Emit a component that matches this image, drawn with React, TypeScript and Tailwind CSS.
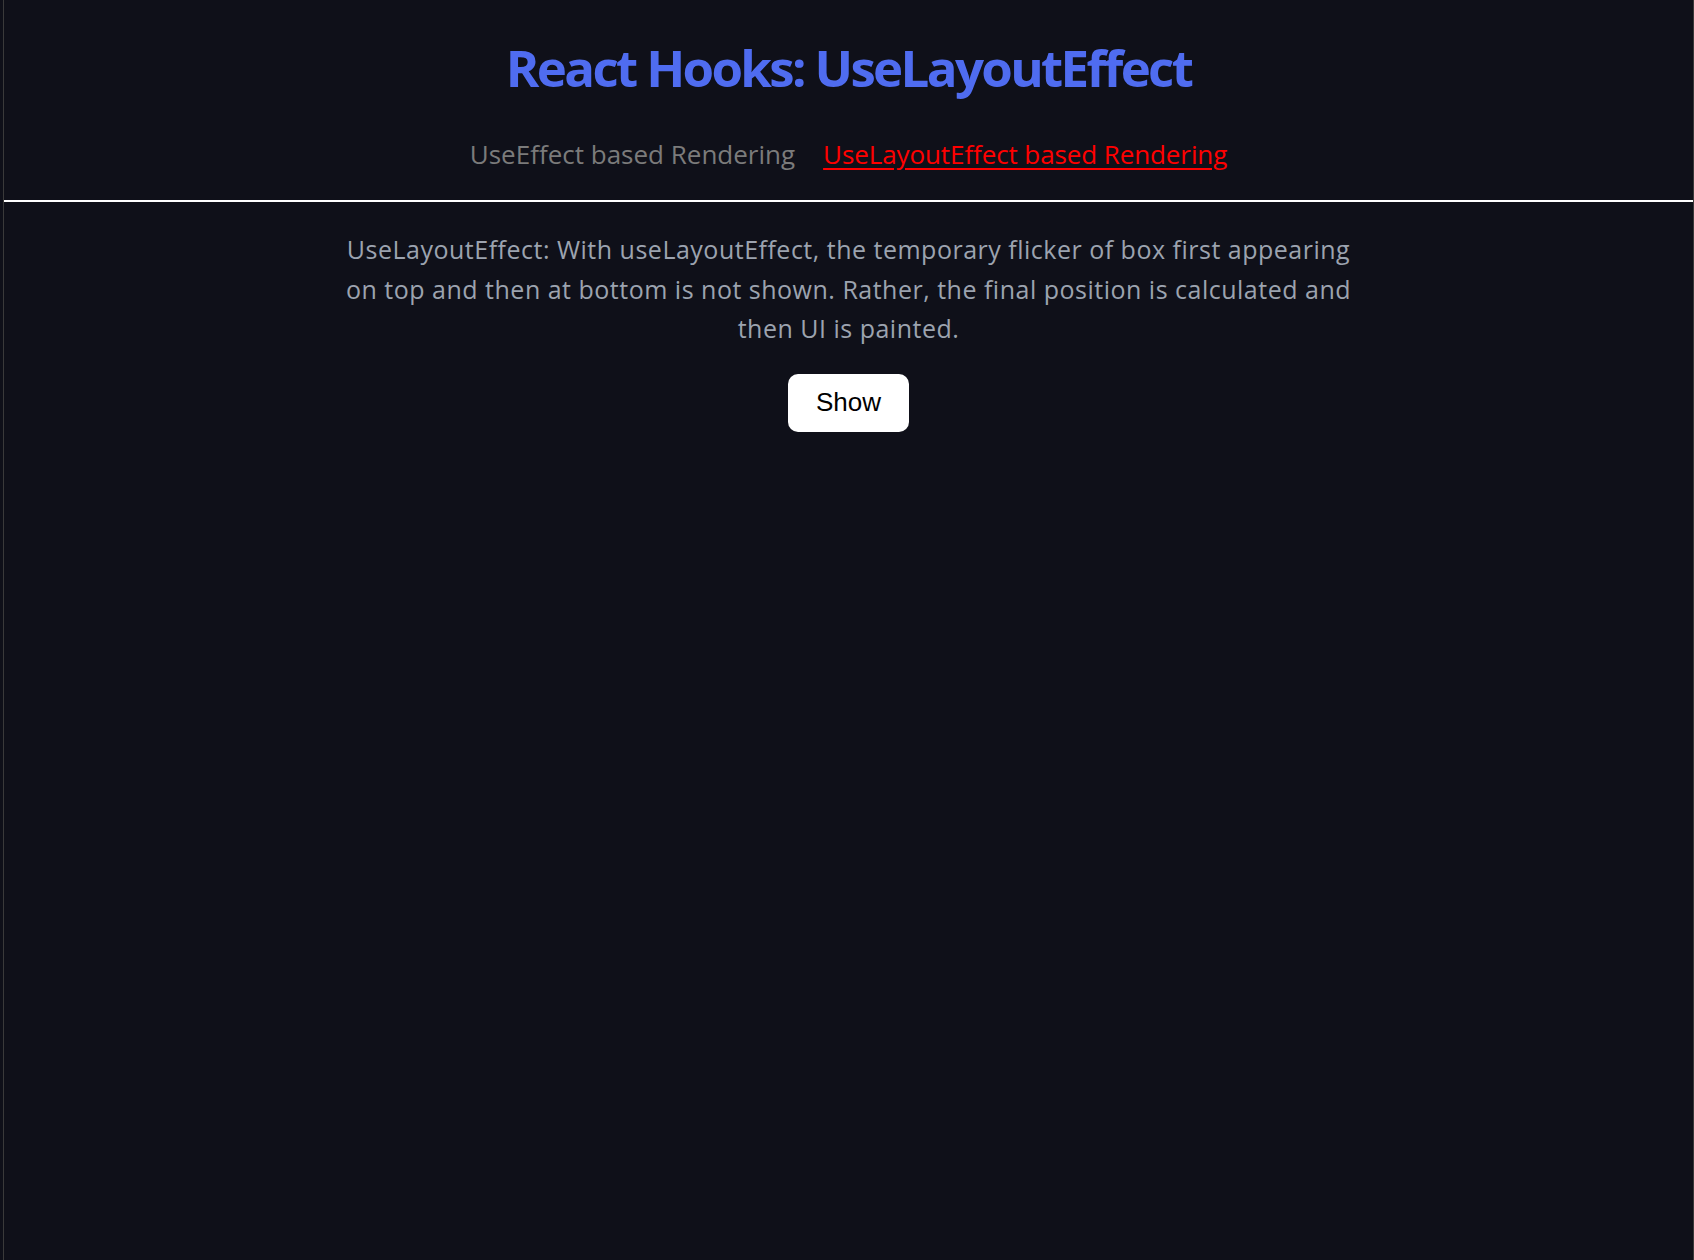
export default function App() {
  return (
    <div className="min-h-screen bg-[#0f1019]">
      <div className="ml-[3px] min-h-screen border-x border-[#3a3a3a] text-center font-['Open_Sans',sans-serif]">
        <header className="pt-[37px] pb-[26px]">
          <h1 className="text-[51px] font-bold leading-[1.2] tracking-[-0.052em] text-[#4f6cf0]">
            React Hooks: UseLayoutEffect
          </h1>
          <nav className="mt-[37px] flex justify-center gap-[28px] text-[26px] leading-[1.5]">
            <a href="#" className="text-[#7b7b7b]">
              UseEffect based Rendering
            </a>
            <a href="#" className="tracking-[-0.1px] text-[#ff0000] underline underline-offset-[4px]">
              UseLayoutEffect based Rendering
            </a>
          </nav>
        </header>
        <div className="h-[2px] bg-white" />
        <main className="flex flex-col items-center pt-[28px]">
          <p className="max-w-[1024px] text-[25px] leading-[39.5px] tracking-[0.5px] text-[#9ca3af]">
            UseLayoutEffect: With useLayoutEffect, the temporary flicker of box first appearing on top and
            then at bottom is not shown. Rather, the final position is calculated and then UI is painted.
          </p>
          <button className="mt-[25px] h-[58px] rounded-[10px] bg-white px-[28px] font-['Liberation_Sans',Arial,sans-serif] text-[26px] text-black">
            Show
          </button>
        </main>
      </div>
    </div>
  );
}
